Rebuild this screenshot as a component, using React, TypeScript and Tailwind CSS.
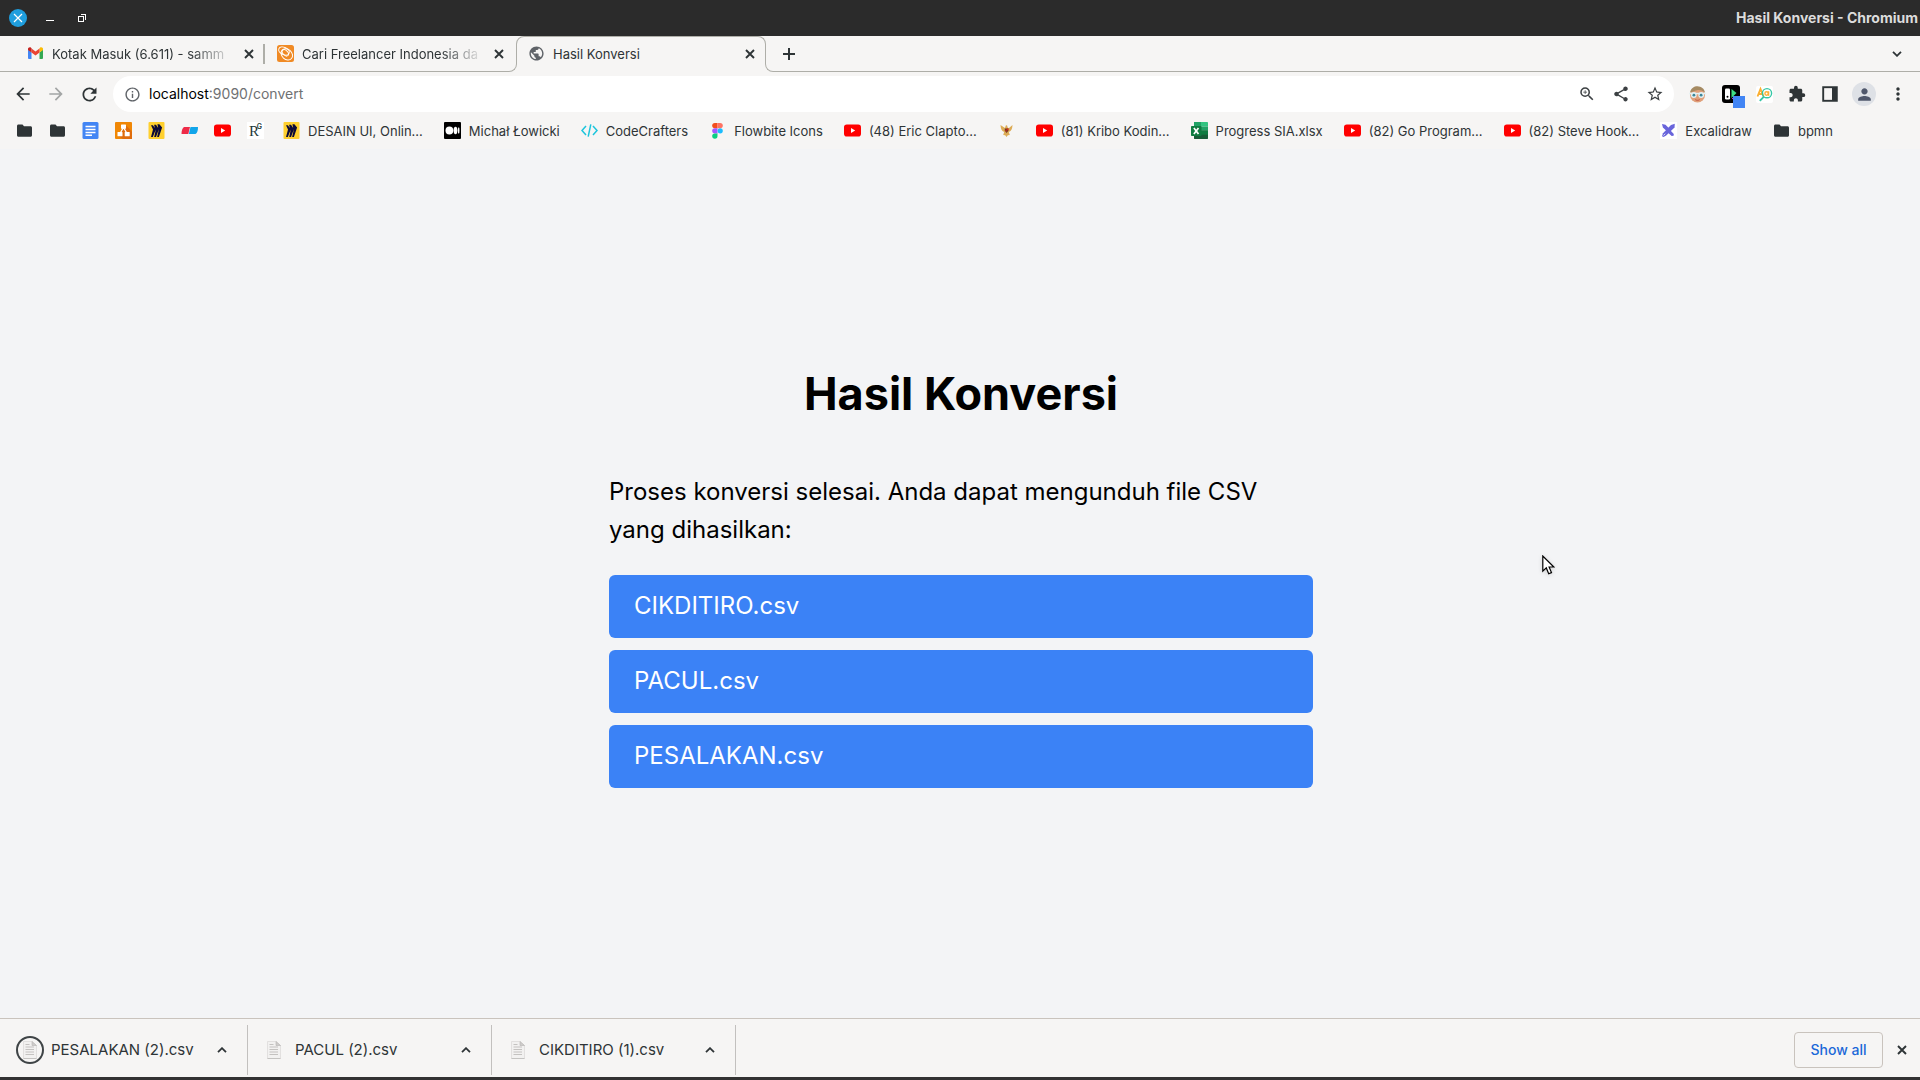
import React from "react";
import {
  MdArrowBack,
  MdArrowForward,
  MdExtension,
  MdInfoOutline,
  MdMoreVert,
  MdPerson,
  MdPublic,
  MdRefresh,
  MdShare,
  MdStarBorder,
  MdZoomIn,
} from "react-icons/md";

const Cross = () => (
  <svg viewBox="0 0 10 10" className="size-[10px]" fill="none" stroke="currentColor" strokeWidth="1.9">
    <path d="M1 1l8 8M9 1L1 9" />
  </svg>
);

const Chevron = ({ up = false }: { up?: boolean }) => (
  <svg viewBox="0 0 10 6" className="h-[6px] w-[10px]" fill="none" stroke="currentColor" strokeWidth="1.8">
    <path d={up ? "M1 5.2L5 1.2L9 5.2" : "M1 0.8L5 4.8L9 0.8"} />
  </svg>
);

const Gmail = () => (
  <svg viewBox="0 0 17 17" className="size-[17px]">
    <path d="M1 4.5v8.2c0 .7.5 1.3 1.200 1.300H4.500V7.500z" fill="#4285f4" />
    <path d="M12.500 14h2.300c.7 0 1.200-.6 1.200-1.300V4.500l-3.500 3z" fill="#34a853" />
    <path d="M12.500 3.500v4L16 4.900V4c0-1.600-1.700-2.400-2.900-1.400z" fill="#fbbc04" />
    <path d="M4.500 7.500v-4l4 3 4-3v4l-4 3z" fill="#ea4335" />
    <path d="M1 4v.9l3.500 2.600v-4l-.6-.9C2.700 1.700 1 2.500 1 4z" fill="#c5221f" />
  </svg>
);

const Freelancer = () => (
  <svg viewBox="0 0 17 17" className="size-[17px]">
    <rect width="17" height="17" rx="2.500" fill="#f08a24" />
    <g fill="none" stroke="#fff" strokeWidth="1">
      <ellipse cx="7" cy="6" rx="5.600" ry="3.600" transform="rotate(25 7 6)" />
      <ellipse cx="9.800" cy="9.300" rx="6.300" ry="5" transform="rotate(42 9.800 9.300)" />
      <ellipse cx="8.300" cy="7.800" rx="3.800" ry="2.400" transform="rotate(45 8.300 7.800)" />
    </g>
  </svg>
);

const Docs = () => (
  <svg viewBox="0 0 17 17" className="size-[17px]">
    <rect x="0.500" width="16" height="17" rx="1.500" fill="#4285f4" />
    <path d="M3.500 4.500h10M3.500 7.500h10M3.500 10.500h10M3.500 13.200h6.500" stroke="#fff" strokeWidth="1.400" />
  </svg>
);

const Drawio = () => (
  <svg viewBox="0 0 17 17" className="size-[17px]">
    <rect width="17" height="17" rx="1" fill="#f08705" />
    <path d="M10.500 3L17 9.500V17H8l-5-3z" fill="#df6c0c" />
    <path d="M8.500 5.500L5 11.500M8.500 5.500l3.500 6" stroke="#fff" strokeWidth="1.300" />
    <rect x="6" y="2.500" width="5" height="4.300" rx=".6" fill="#fff" />
    <rect x="2.500" y="10" width="5" height="4.300" rx=".6" fill="#fff" />
    <rect x="9.700" y="10" width="5" height="4.300" rx=".6" fill="#fff" />
  </svg>
);

const Miro = () => (
  <svg viewBox="0 0 17 17" className="size-[17px]">
    <rect x="0.500" width="16" height="17" rx="1" fill="#ffd02f" />
    <path
      d="M3 3.200h1.900L6.800 6 6.100 2.700h1.900L10.200 6l-.8-3.800h2l2.700 3.200L10.900 15H9.100l1.900-7.900L8 15H6.200l1.600-7.600L4.800 15H3l2-7.600z"
      fill="#0b0a38"
    />
  </svg>
);

const Flag = () => (
  <svg viewBox="0 0 17 17" className="size-[17px]">
    <path d="M3 5h6L7.300 12H0.500C.5 8.500 1.500 6 3 5z" fill="#ee2b47" />
    <path d="M9.500 5H17c0 3.500-.8 6-2.500 7H7.800z" fill="#12a5ea" />
  </svg>
);

const Youtube = () => (
  <svg viewBox="0 0 17 17" className="size-[17px]">
    <rect y="2.500" width="17" height="12" rx="2.800" fill="#f00" />
    <path d="M7 6v5l4.200-2.500z" fill="#fff" />
  </svg>
);

const ResearchGate = () => (
  <span className="relative block size-[17px] bg-white font-['Liberation_Serif',serif] text-[15px] leading-[18px] text-[#1d3a3a]">
    <span className="pl-[2px]">R</span>
    <span className="absolute top-px right-[2px] font-['Inter',sans-serif] text-[7px] leading-[8px] font-semibold">G</span>
  </span>
);

const Medium = () => (
  <svg viewBox="0 0 17 17" className="size-[17px]">
    <rect width="17" height="17" rx="1" fill="#000" />
    <circle cx="5.400" cy="8.500" r="3.900" fill="#fff" />
    <ellipse cx="11.500" cy="8.500" rx="1.900" ry="3.700" fill="#fff" />
    <ellipse cx="14.700" cy="8.500" rx=".8" ry="3.300" fill="#fff" />
  </svg>
);

const CodeCrafters = () => (
  <svg viewBox="0 0 17 17" className="size-[17px]" fill="none" stroke="#1cc5dc" strokeWidth="1.500">
    <path d="M5 4L1 8.500 5 13M12 4l4 4.500L12 13M9.800 2.300L7.200 14.700" />
  </svg>
);

const Figma = () => (
  <svg viewBox="0 0 17 17" className="size-[17px]">
    <path d="M5.800 1h2.700v5.200H5.800a2.600 2.600 0 010-5.200z" fill="#f24e1e" />
    <path d="M8.500 1h2.700a2.600 2.600 0 010 5.200H8.500z" fill="#ff7262" />
    <path d="M5.800 6.200h2.700v5.200H5.800a2.600 2.600 0 010-5.200z" fill="#a259ff" />
    <circle cx="11.200" cy="8.800" r="2.600" fill="#1abcfe" />
    <path d="M5.800 11.400h2.700V14a2.650 2.650 0 11-2.700-2.600z" fill="#0acf83" />
  </svg>
);

const Garuda = () => (
  <svg viewBox="0 0 17 17" className="size-[17px]">
    <path
      d="M2.500 3c.2 3.500 1 6 3.700 7l-1 3 2 .3 1.300 1.700 1.300-1.700 2-.3-1-3c2.700-1 3.500-3.500 3.700-7L11 6 9.800 5.800 9 3.200 7.800 3.600 7 6z"
      fill="#dcab55"
    />
    <path d="M6.800 6.500h3.600v2.200L8.600 11 6.800 8.700z" fill="#6b3a26" />
    <path d="M8.600 6.500h1.800v1.800H8.600zM6.800 8.200h1.800V10z" fill="#d8261c" />
  </svg>
);

const Excel = () => (
  <svg viewBox="0 0 17 17" className="size-[17px]">
    <path d="M3 0h7v8.500H3z" fill="#21a366" />
    <path d="M10 0h6.300c.4 0 .7.300.7.700V4.500h-7z" fill="#33c481" />
    <path d="M10 4.500h7v4h-7z" fill="#21a366" />
    <path d="M3 8.500h14v8c0 .3-.3.500-.5.500h-13c-.3 0-.5-.2-.5-.500z" fill="#185c37" />
    <path d="M10 8.500h7v4.200h-7z" fill="#107c41" />
    <rect y="4" width="10.500" height="10" rx=".8" fill="#107c41" />
    <path d="M2.900 6l4.600 6M7.500 6l-4.600 6" stroke="#fff" strokeWidth="1.700" />
  </svg>
);

const Excalidraw = () => (
  <svg viewBox="0 0 17 17" className="size-[17px]">
    <rect width="17" height="17" fill="#fff" />
    <path d="M2 2l3.500.8L9 6.300l-2.600 2.500L2.900 5.500zM10.500 8.600l3.300 3.300-.2 1.900-1.900.1-3.400-3z" fill="#6965db" />
    <path d="M14.800 1.800l-.3 3.600-8.300 8L3.500 15 2 14.200l1-3L11 3z" fill="#6965db" />
    <path d="M3.500 13.500l1.700-1.800" stroke="#fff" strokeWidth=".8" />
  </svg>
);

const Folder = () => (
  <svg viewBox="0 0 17 17" className="size-[17px]" fill="#2e3436">
    <path d="M1 4c0-.8.600-1.500 1.500-1.500h4L8 4.300h6.500c.9 0 1.500.7 1.500 1.500v7.400c0 .8-.6 1.500-1.500 1.500h-12c-.9 0-1.500-.7-1.500-1.500z" />
  </svg>
);

const FileIcon = () => (
  <svg viewBox="0 0 14 18" className="h-[18px] w-[14px]">
    <path d="M.5.500H9l4.500 4v13H.5z" fill="#f2f1f0" stroke="#dddbd9" strokeWidth=".8" />
    <path d="M9 .5v4h4.500z" fill="#cfcdcb" stroke="#b5b3b1" strokeWidth=".6" />
    <path d="M2.500 3.500h4M2.500 6h8.500M2.500 8.500h8.500M2.500 11h8.500M2.500 13.500h8.500" stroke="#c4c2c0" strokeWidth="1.100" />
    <path d="M.5 17.500h13" stroke="#bdbbb9" strokeWidth=".8" />
  </svg>
);

function Tab({ icon, title, active = false }: { icon: React.ReactNode; title: string; active?: boolean }) {
  return (
    <div className="flex h-[35px] w-[244px] shrink-0 items-center pl-3">
      <button type="button" role="tab" aria-selected={active} className="flex min-w-0 flex-1 items-center gap-2 text-left">
        <span className="shrink-0">{icon}</span>
        <span
          className={
            active
              ? "flex-1 whitespace-nowrap"
              : "flex-1 whitespace-nowrap [mask-image:linear-gradient(to_right,black_76%,transparent)]"
          }
        >
          {title}
        </span>
      </button>
      <button type="button" aria-label="Close tab" className="ml-[5px] flex size-5 items-center justify-center">
        <Cross />
      </button>
    </div>
  );
}

const iconBookmarks = [
  { name: "Folder 1", icon: <Folder /> },
  { name: "Folder 2", icon: <Folder /> },
  { name: "Docs", icon: <Docs /> },
  { name: "Diagrams", icon: <Drawio /> },
  { name: "Miro", icon: <Miro /> },
  { name: "Flag", icon: <Flag /> },
  { name: "YouTube", icon: <Youtube /> },
  { name: "ResearchGate", icon: <ResearchGate /> },
];

const bookmarks = [
  { text: "DESAIN UI, Onlin...", icon: <Miro /> },
  { text: "Michał Łowicki", icon: <Medium /> },
  { text: "CodeCrafters", icon: <CodeCrafters /> },
  { text: "Flowbite Icons", icon: <Figma /> },
  { text: "(48) Eric Clapto...", icon: <Youtube /> },
  { text: "", icon: <Garuda /> },
  { text: "(81) Kribo Kodin...", icon: <Youtube /> },
  { text: "Progress SIA.xlsx", icon: <Excel /> },
  { text: "(82) Go Program...", icon: <Youtube /> },
  { text: "(82) Steve Hook...", icon: <Youtube /> },
  { text: "Excalidraw", icon: <Excalidraw /> },
  { text: "bpmn", icon: <Folder /> },
];

const downloads = ["PESALAKAN (2).csv", "PACUL (2).csv", "CIKDITIRO (1).csv"];
const files = ["CIKDITIRO.csv", "PACUL.csv", "PESALAKAN.csv"];

function TitleBar() {
  return (
    <header className="flex h-9 items-center bg-[#2b2b2b] pl-[9px] pr-[2px] text-white">
      <button type="button" aria-label="Close window" className="flex size-[18px] items-center justify-center rounded-full bg-[#1f9ede]">
        <svg viewBox="0 0 10 10" className="size-[10px]" stroke="#fff" strokeWidth="1.200">
          <path d="M1 1l8 8M9 1L1 9" />
        </svg>
      </button>
      <button type="button" aria-label="Minimize window" className="ml-[19px] flex h-[5px] w-2 items-end">
        <span className="h-px w-2 bg-white" />
      </button>
      <button type="button" aria-label="Restore window" className="ml-6">
        <svg viewBox="0 0 8 8" className="size-2 overflow-visible" fill="none" stroke="#fff" shapeRendering="crispEdges">
          <path d="M.5 2.500h5v5h-5zM2.500.5h5v5" />
        </svg>
      </button>
      <h1 className="ml-auto text-[14px] font-bold text-[#dcdcdc]">Hasil Konversi - Chromium</h1>
    </header>
  );
}

function TabStrip() {
  return (
    <div role="tablist" className="flex h-9 bg-[#f6f5f4]">
      <div className="flex w-[509px] shrink-0 border-b border-[#aeaea8] pl-[15px]">
        <Tab icon={<Gmail />} title="Kotak Masuk (6.611) - samm" />
        <span className="flex w-[6px] shrink-0 items-center justify-end">
          <span className="h-5 w-[2px] bg-[#aeaea8]" />
        </span>
        <Tab icon={<Freelancer />} title="Cari Freelancer Indonesia da" />
      </div>
      <div className="relative mx-[7px] w-[250px] shrink-0">
        <span className="absolute inset-x-0 top-0 bottom-2 rounded-t-lg border-x border-t border-[#aeaea8]" />
        <span className="absolute bottom-0 -left-[7px] size-2 rounded-br-lg border-r border-b border-[#aeaea8]" />
        <span className="absolute -right-[7px] bottom-0 size-2 rounded-bl-lg border-b border-l border-[#aeaea8]" />
        <div className="relative">
          <Tab active icon={<MdPublic className="size-[17px] text-[#5f6368]" />} title="Hasil Konversi" />
        </div>
      </div>
      <div className="flex flex-1 items-center justify-between border-b border-[#aeaea8] pr-[18px] pl-[10px]">
        <button type="button" aria-label="New tab">
          <svg viewBox="0 0 12 12" className="size-3" stroke="currentColor" strokeWidth="2">
            <path d="M6 0v12M0 6h12" />
          </svg>
        </button>
        <button type="button" aria-label="Search tabs">
          <Chevron />
        </button>
      </div>
    </div>
  );
}

function Toolbar() {
  return (
    <div className="flex h-10 items-center bg-[#f6f5f4] pt-1 pl-[13px]">
      <div className="flex w-[100px] shrink-0 gap-[13px]">
        <button type="button" aria-label="Back">
          <MdArrowBack className="size-5" />
        </button>
        <button type="button" aria-label="Forward" className="text-[#a3a5a5]">
          <MdArrowForward className="size-5" />
        </button>
        <button type="button" aria-label="Reload">
          <MdRefresh className="size-[21px]" />
        </button>
      </div>
      <div className="flex h-9 flex-1 items-center rounded-full bg-white pr-[10px] pl-[11px] text-[#3c4043]">
        <MdInfoOutline className="size-[17px] shrink-0 text-[#5f6368]" />
        <label htmlFor="address" className="ml-2 text-[14px] text-black">
          localhost
        </label>
        <input
          id="address"
          defaultValue=":9090/convert"
          className="min-w-0 flex-1 bg-transparent text-[14px] text-[#6f7173] outline-none"
        />
        <div className="flex gap-4">
          <button type="button" aria-label="Zoom">
            <MdZoomIn className="size-[18px]" />
          </button>
          <button type="button" aria-label="Share">
            <MdShare className="size-[18px]" />
          </button>
          <button type="button" aria-label="Bookmark this page">
            <MdStarBorder className="size-[18px]" />
          </button>
        </div>
      </div>
      <div className="flex w-[246px] shrink-0 items-center pl-[15px]">
        <button type="button" aria-label="Avatar extension">
          <svg viewBox="0 0 17 17" className="size-[17px]">
            <circle cx="8.500" cy="9" r="7.500" fill="#e0a07a" />
            <path d="M1 6.500C2 1.500 6 0 8.500.2 12 .3 15.500 2.500 16 6.500c-3-2-5-2.800-8-2.300S3 6 1 6.500z" fill="#a58a62" />
            <path d="M0 7.500h17" stroke="#e4f1f3" strokeWidth="1.500" />
            <circle cx="4.800" cy="9" r="2.900" fill="#e4f1f3" />
            <circle cx="12.200" cy="9" r="2.900" fill="#e4f1f3" />
            <circle cx="4.900" cy="9.200" r="1.400" fill="#3d8699" />
            <circle cx="12.100" cy="9.200" r="1.400" fill="#3d8699" />
            <path d="M6.300 13.700c1.500.8 3 .8 4.400 0" stroke="#c0503c" fill="none" />
          </svg>
        </button>
        <button type="button" aria-label="Device extension" className="mt-[5px] ml-4">
          <svg viewBox="0 0 23 23" className="size-[23px]">
            <rect width="18" height="18" y="0" rx="3" fill="#000" />
            <rect x="3" y="3.500" width="5" height="11" rx="1.300" fill="#fff" />
            <circle cx="5.500" cy="11.800" r="1" fill="#000" />
            <path d="M9.500 4l5 4-5 5z" fill="#3ddc84" />
            <path d="M10 14l3-3" stroke="#b03ce0" />
            <rect x="11" y="11" width="12" height="12" fill="#4285f4" />
          </svg>
        </button>
        <button type="button" aria-label="Translate extension" className="ml-[11px]">
          <svg viewBox="0 0 17 17" className="size-[17px]" fill="none">
            <rect width="17" height="17" rx="2" fill="#fff" />
            <path d="M1.500 10.500L4.500 3l3 7.500M2.500 8h4" stroke="#fbb034" strokeWidth="1.900" />
            <circle cx="11" cy="7.200" r="4.600" stroke="#34c7a5" strokeWidth="1.400" />
            <path d="M7.700 10.800L3.800 14.800" stroke="#34c7a5" strokeWidth="1.900" />
            <circle cx="10.600" cy="7.500" r="1.700" stroke="#fbb034" strokeWidth="1.400" />
            <path d="M12.600 5.300v4.500" stroke="#fbb034" strokeWidth="1.400" />
          </svg>
        </button>
        <button type="button" aria-label="Extensions" className="ml-[15px]">
          <MdExtension className="size-[18px]" />
        </button>
        <button type="button" aria-label="Side panel" className="ml-4">
          <svg viewBox="0 0 16 16" className="size-4" fill="none">
            <rect x="1.200" y="1.200" width="13.600" height="13.600" stroke="currentColor" strokeWidth="1.900" />
            <path d="M10 1h5v14h-5z" fill="currentColor" />
          </svg>
        </button>
        <button type="button" aria-label="Profile" className="ml-[14px] flex size-6 items-center justify-center rounded-full bg-[#dee1e6] text-[#50586c]">
          <MdPerson className="size-[19px]" />
        </button>
        <button type="button" aria-label="Menu" className="ml-3">
          <MdMoreVert className="size-5" />
        </button>
      </div>
    </div>
  );
}

function BookmarksBar() {
  return (
    <nav aria-label="Bookmarks" className="flex h-[37px] items-center gap-[19px] bg-[#f6f5f4] pl-4">
      <div className="flex gap-4">
        {iconBookmarks.map((b) => (
          <a key={b.name} href="#" aria-label={b.name}>
            {b.icon}
          </a>
        ))}
      </div>
      <div className="flex gap-[21px]">
        {bookmarks.map((b) => (
          <a key={b.text} href="#" aria-label={b.text || "Garuda"} className="flex items-center gap-2 whitespace-nowrap">
            {b.icon}
            {b.text && <span>{b.text}</span>}
          </a>
        ))}
      </div>
    </nav>
  );
}

function DownloadShelf() {
  return (
    <footer className="flex h-[59px] items-center border-t border-[#c9c3bd] bg-[#f6f5f4] pt-[3px] pl-1">
      {downloads.map((name, i) => (
        <div key={name} className="flex h-[50px] w-[244px] shrink-0 items-center border-r border-[#c2c0be] pr-[15px] pl-3">
          <button type="button" className="flex flex-1 items-center gap-[7px] text-left text-[15px]">
            <span
              className={
                i === 0
                  ? "flex size-7 items-center justify-center rounded-full border-2 border-[#3f4446]"
                  : "flex size-7 items-center justify-center"
              }
            >
              <FileIcon />
            </span>
            {name}
          </button>
          <button type="button" aria-label={`Options for ${name}`} className="flex size-5 items-center justify-center">
            <Chevron up />
          </button>
        </div>
      ))}
      <button type="button" className="ml-auto h-9 w-[89px] rounded border border-[#c9c3bd] text-[14px] font-medium text-[#1b68d8]">
        Show all
      </button>
      <button type="button" aria-label="Close downloads" className="mr-[13px] ml-[14px]">
        <Cross />
      </button>
    </footer>
  );
}

export default function App() {
  return (
    <div className="relative flex min-h-screen flex-col overflow-hidden bg-[#f3f4f6] font-['Inter',sans-serif] text-[13px] leading-5 text-[#2e3436]">
      <TitleBar />
      <TabStrip />
      <Toolbar />
      <BookmarksBar />
      <main className="flex flex-1 flex-col items-center justify-center pl-[2px] text-[24px] leading-[38px] text-black">
        <h2 className="mb-[50px] text-[45px] leading-[58px] font-bold">Hasil Konversi</h2>
        <div className="w-full max-w-[704px]">
          <p className="mb-[26px]">Proses konversi selesai. Anda dapat mengunduh file CSV yang dihasilkan:</p>
          <ul className="mb-[14px] flex flex-col gap-3">
            {files.map((f) => (
              <li key={f}>
                <a href="#" className="block rounded-md bg-[#3b82f6] px-[25px] pt-3 pb-[13px] text-white">
                  {f}
                </a>
              </li>
            ))}
          </ul>
        </div>
      </main>
      <DownloadShelf />
      <div className="h-[3px] bg-[#323232]" />
      <svg viewBox="0 0 13 21" className="absolute top-[555px] left-[1542px] h-[21px] w-[13px] drop-shadow-sm">
        <path d="M.8 1v15.200l3.500-3.300 2.400 5.900 2.800-1.200-2.400-5.600h4.800z" fill="#fff" stroke="#000" strokeWidth="1.200" />
      </svg>
    </div>
  );
}
